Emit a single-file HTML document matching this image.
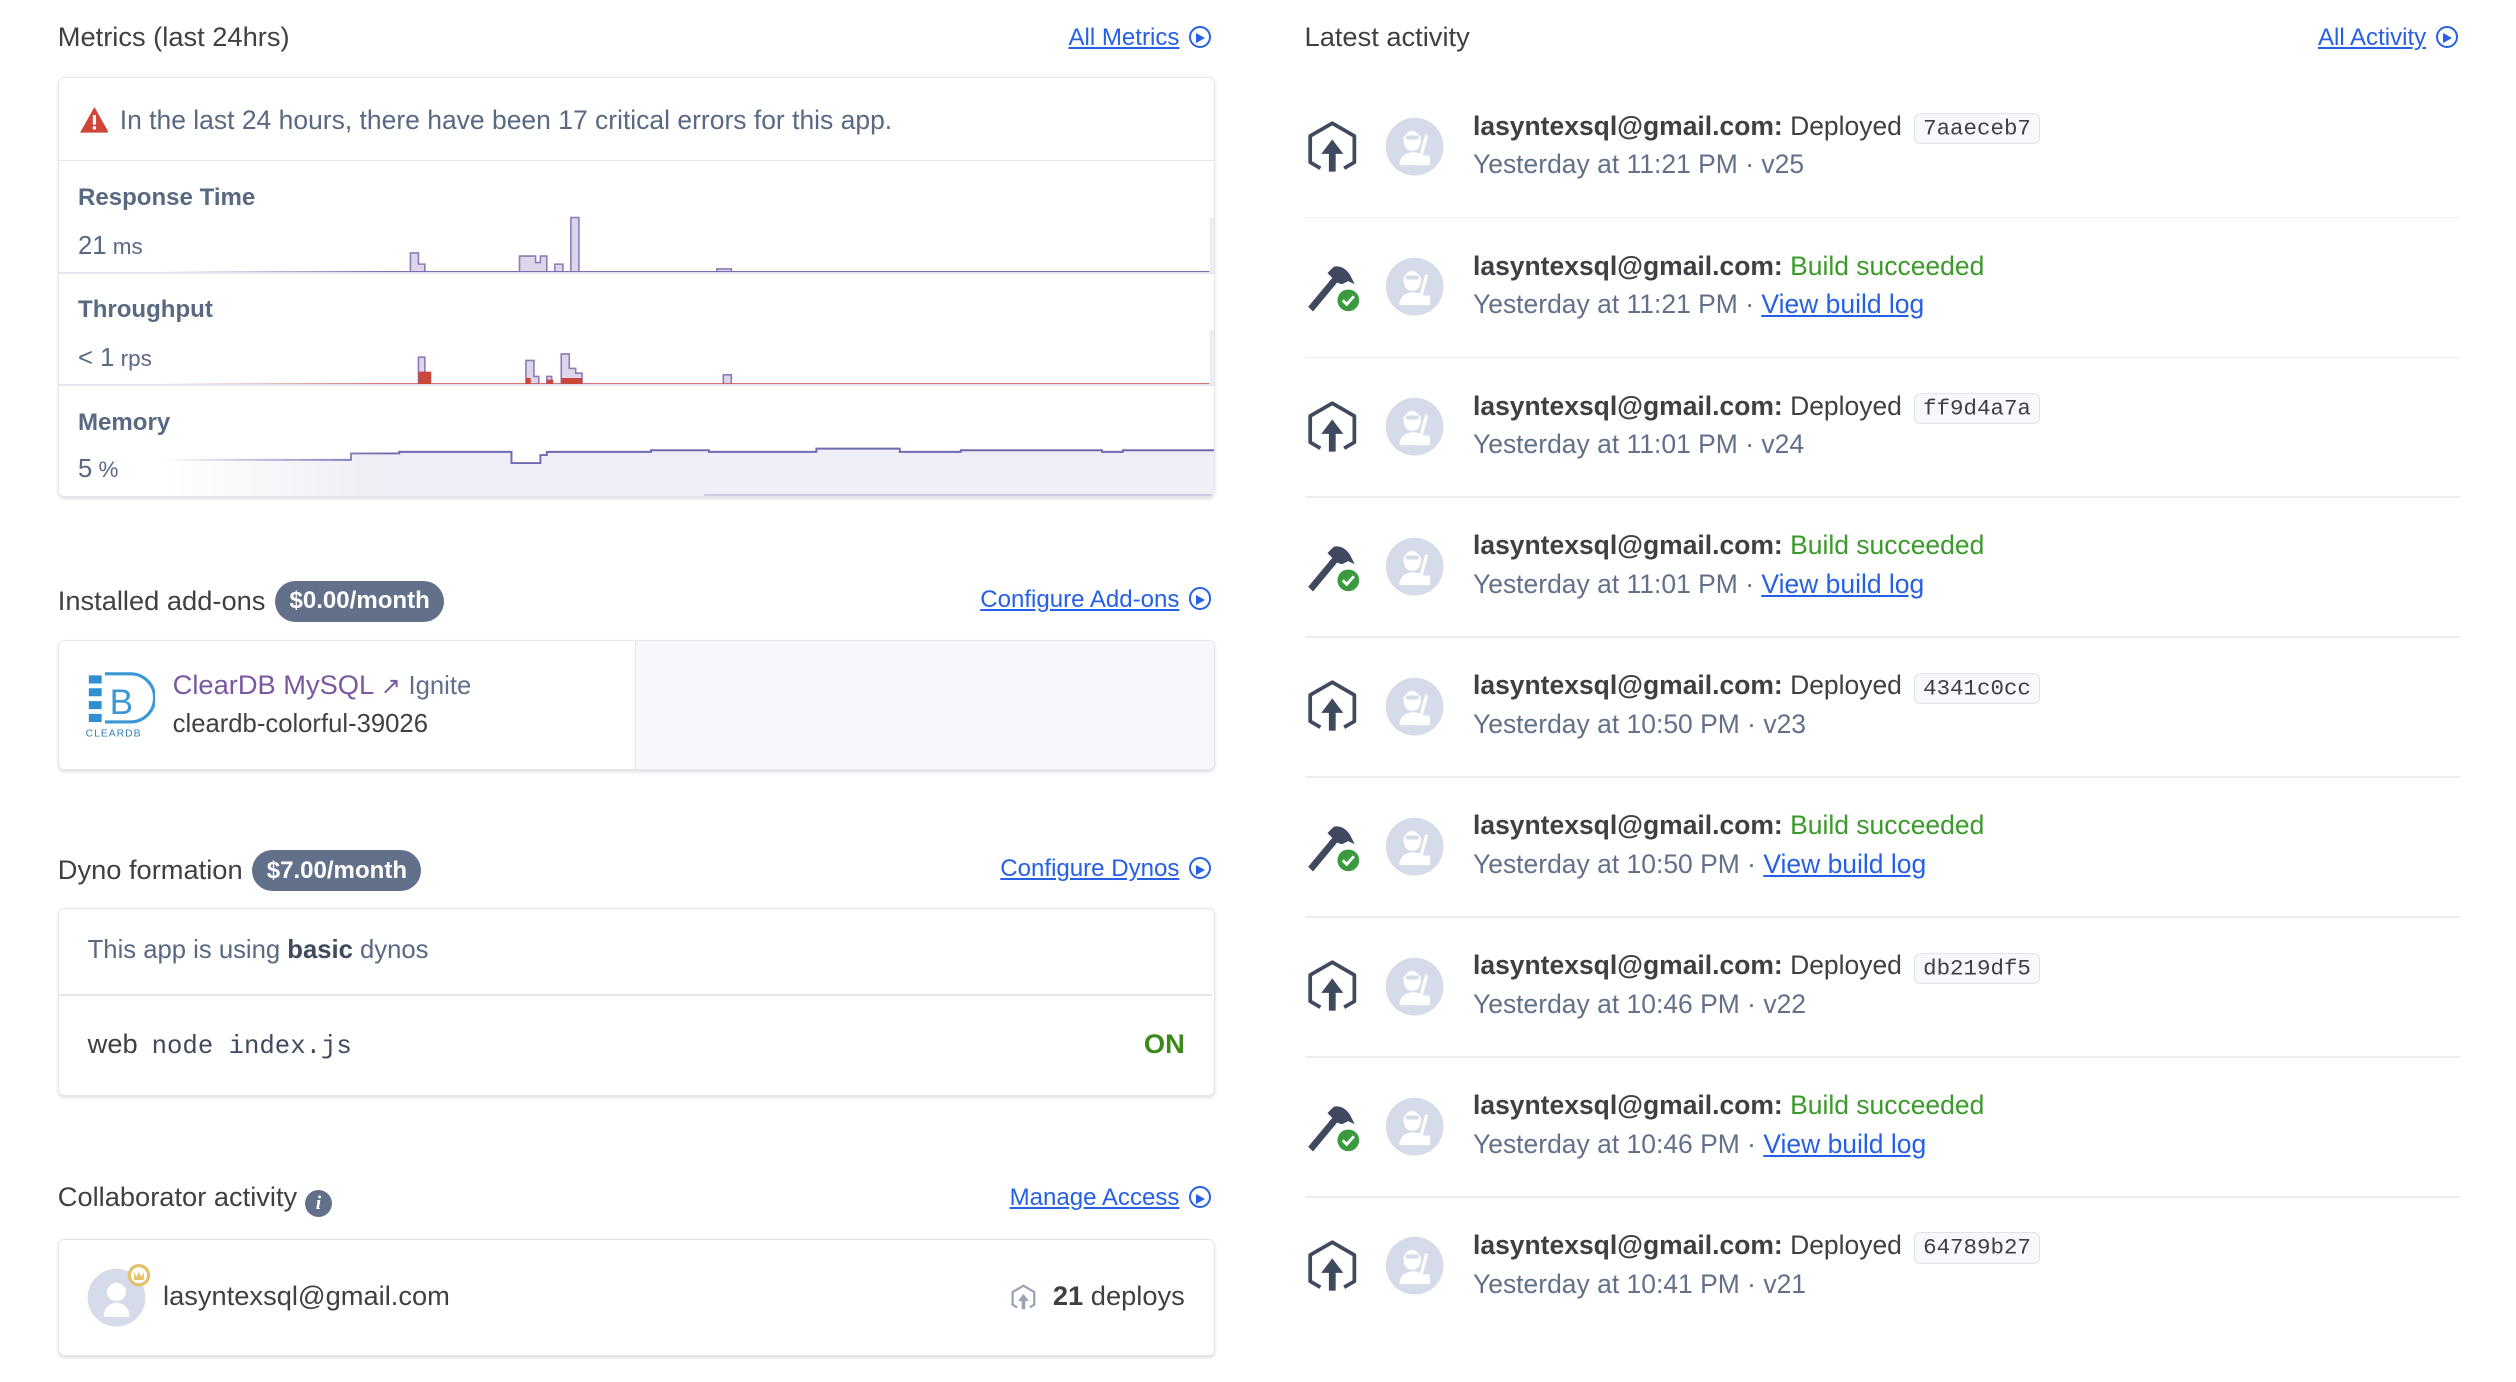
<!DOCTYPE html>
<html><head><meta charset="utf-8"><style>
*{box-sizing:border-box;margin:0;padding:0}
html,body{width:2516px;height:1382px;overflow:hidden;background:#fff}
#w{zoom:1.6046;width:1568px;height:861px;position:relative;font-family:"Liberation Sans",sans-serif;color:#3f3f44}
.a{position:absolute}
.h{font-size:17px;color:#3f3f44;white-space:nowrap}
.lnk{font-size:15px;color:#2660e5;text-decoration:underline;white-space:nowrap}
.ci{display:inline-block;width:14px;height:14px;border:1.5px solid #2660e5;border-radius:50%;vertical-align:-2px;margin-left:6px;position:relative}
.ci:after{content:"";position:absolute;left:3px;top:3.5px;border-left:6px solid #2660e5;border-top:3.5px solid transparent;border-bottom:3.5px solid transparent}
.card{border:1px solid #e3e6ed;border-radius:4px;box-shadow:0 1px 2px rgba(0,0,0,.12);background:#fff}
.pill{display:inline-block;background:#62708a;color:#fff;font-weight:bold;font-size:15px;border-radius:13px;padding:4px 9px;margin-left:6px;vertical-align:1px}
.lbl{font-size:15px;font-weight:bold;color:#596981}
.val{font-size:16px;color:#596981}
.row{position:absolute;left:0;width:720px;height:87px}
.l1{position:absolute;left:105px;top:21px;font-size:16.5px;white-space:nowrap;color:#3f3f44}
.l2{position:absolute;left:105px;top:45px;font-size:16.5px;white-space:nowrap;color:#62708a}
.b{font-weight:bold;color:#3f3f44}
.g{color:#3a9a2a}
.code{font-family:"Liberation Mono",monospace;font-size:14px;border:1px solid #dfe3ea;background:#f7f8fb;border-radius:4px;padding:1px 5px;color:#3f3f44;margin-left:3px}
.vl{color:#2660e5;text-decoration:underline}
.div{position:absolute;left:0;width:720px;height:1px;background:#eceef2}
</style></head><body><div id="w">

<!-- Metrics -->
<div class="a h" style="left:36px;top:13px">Metrics (last 24hrs)</div>
<div class="a lnk" style="right:813px;top:15px">All Metrics<span class="ci"></span></div>
<div class="a card" style="left:36px;top:48px;width:721px;height:262px;overflow:hidden">
  <svg class="a" style="left:0;top:0" width="721" height="262" viewBox="36 48 721 262">
    <defs><linearGradient id="fd" x1="0" x2="1"><stop offset="0" stop-color="#fff" stop-opacity="1"/><stop offset="1" stop-color="#fff" stop-opacity="0"/></linearGradient></defs>
    <path d="M255 169 V157 H260 V164 H264 V169 Z M323 169 V159 H333 V163 H336 V159 H340 V169 Z M345 169 V164 H350 V169 Z M355 169 V135 H360 V169 Z M446 169 V167 H455 V169 Z" fill="#ddd6ea" stroke="#8e7cb8" stroke-width="1"/>
    <line x1="100" y1="169" x2="757" y2="169" stroke="#7d6bb0" stroke-width="1.5"/>
    <path d="M260 239 V222 H264 V239 Z M327 239 V224 H332 V234 H335 V239 Z M340 239 V234 H343 V239 Z M349 239 V220 H354 V229 H358 V232 H362 V239 Z M450 239 V233 H455 V239 Z" fill="#ddd6ea" stroke="#8e7cb8" stroke-width="1"/>
    <path d="M260 239 V231 H268 V239 Z M327 239 V235 H330 V239 Z M340 239 V236 H344 V239 Z M349 239 V235 H362 V239 Z" fill="#c9463d"/>
    <line x1="100" y1="239" x2="757" y2="239" stroke="#c9463d" stroke-width="1.5"/>
    <path d="M100 286 H218 V282 H248 V281 H318 V288 H336 V283 H340 V281 H405 V280 H441 V281 H508 V279 H560 V281 H598 V280 H686 V281 H699 V280 H757 V310 H100 Z" fill="#efedf5"/>
    <path d="M100 286 H218 V282 H248 V281 H318 V288 H336 V283 H340 V281 H405 V280 H441 V281 H508 V279 H560 V281 H598 V280 H686 V281 H699 V280 H757" fill="none" stroke="#6f6bb0" stroke-width="1.2"/>
    <line x1="438" y1="308" x2="757" y2="308" stroke="#cfc9e0" stroke-width="1.5"/>
    <rect x="100" y="100" width="140" height="210" fill="url(#fd)"/>
    <rect x="753" y="135" width="3" height="34" fill="#eee"/>
    <rect x="753" y="205" width="3" height="34" fill="#eee"/>
  </svg>
  <div class="a" style="left:0;top:0;width:721px;height:52px;border-bottom:1px solid #e3e6ed;background:#fff">
    <svg class="a" style="left:13px;top:18px" width="18" height="16" viewBox="0 0 18 16"><path d="M9 0 L18 16 H0 Z" fill="#d0453a"/><rect x="8" y="5" width="2" height="6" fill="#fff"/><rect x="8" y="12" width="2" height="2" fill="#fff"/></svg>
    <div class="a" style="left:38px;top:17px;font-size:16.5px;color:#596981;white-space:nowrap">In the last 24 hours, there have been 17 critical errors for this app.</div>
  </div>
  <div class="a lbl" style="left:12px;top:66px">Response Time</div>
  <div class="a val" style="left:12px;top:96px">21<span style="font-size:14px"> ms</span></div>
  <div class="a lbl" style="left:12px;top:136px">Throughput</div>
  <div class="a val" style="left:12px;top:166px">&lt; 1<span style="font-size:14px"> rps</span></div>
  <div class="a lbl" style="left:12px;top:206px">Memory</div>
  <div class="a val" style="left:12px;top:235px">5<span style="font-size:14px"> %</span></div>
  <div class="a" style="left:0;top:121px;width:721px;height:1px;background:#e3e6ed"></div>
  <div class="a" style="left:0;top:191px;width:721px;height:1px;background:#e3e6ed"></div>
</div>

<!-- Add-ons -->
<div class="a h" style="left:36px;top:362px">Installed add-ons<span class="pill">$0.00/month</span></div>
<div class="a lnk" style="right:813px;top:365px">Configure Add-ons<span class="ci"></span></div>
<div class="a card" style="left:36px;top:399px;width:721px;height:81px;overflow:hidden">
  <div class="a" style="left:359px;top:0;width:362px;height:81px;background:#f7f8fb;border-left:1px solid #e3e6ed"></div>
  <svg class="a" style="left:16px;top:17px" width="44" height="44" viewBox="0 0 44 44">
    <path d="M3 4 h8 v5 h-8z M3 12 h8 v5 h-8z M3 20 h8 v5 h-8z M3 28 h8 v5 h-8z" fill="#2f8fd0"/>
    <path d="M13 3 h16 a13 13 0 0 1 0 30 h-16" fill="none" stroke="#3b98d6" stroke-width="2"/>
    <text x="16" y="28" font-family="Liberation Sans" font-size="22" fill="#3b98d6">B</text>
    <text x="1" y="42" font-family="Liberation Sans" font-size="6.5" fill="#2f7fb8" letter-spacing="0.6">CLEARDB</text>
  </svg>
  <div class="a" style="left:71px;top:17px;font-size:17px;color:#79589f;white-space:nowrap">ClearDB MySQL <span style="font-size:15px">&#8599;</span> <span style="color:#62708a;font-size:16px">Ignite</span></div>
  <div class="a" style="left:71px;top:43px;font-size:16px;color:#3f3f44">cleardb-colorful-39026</div>
</div>

<!-- Dyno -->
<div class="a h" style="left:36px;top:530px">Dyno formation<span class="pill">$7.00/month</span></div>
<div class="a lnk" style="right:813px;top:533px">Configure Dynos<span class="ci"></span></div>
<div class="a card" style="left:36px;top:566px;width:721px;height:117px">
  <div class="a" style="left:18px;top:17px;font-size:16px;color:#596981">This app is using <b style="color:#3f4a5e">basic</b> dynos</div>
  <div class="a" style="left:0;top:53px;width:719px;height:1px;background:#e3e6ed"></div>
  <div class="a" style="left:18px;top:74px;font-size:17px;color:#3f3f44">web <span style="font-family:'Liberation Mono',monospace;font-size:16px;color:#3f4a5e;margin-left:4px">node index.js</span></div>
  <div class="a" style="right:18px;top:74px;font-size:17px;font-weight:bold;color:#3a8a1a">ON</div>
</div>

<!-- Collaborator -->
<div class="a h" style="left:36px;top:736px">Collaborator activity <span style="display:inline-block;width:17px;height:17px;border-radius:50%;background:#62708a;color:#fff;font-size:12px;font-style:italic;font-weight:bold;text-align:center;line-height:17px;font-family:'Liberation Serif',serif;vertical-align:-2px">i</span></div>
<div class="a lnk" style="right:813px;top:738px">Manage Access<span class="ci"></span></div>
<div class="a card" style="left:36px;top:772px;width:721px;height:73px">
  <svg class="a" style="left:17px;top:15px" width="40" height="40" viewBox="0 0 40 40">
    <circle cx="19" cy="21" r="18" fill="#d5dbe8"/>
    <path d="M11 33 q0-8 8-9 q8 1 8 9z M13 16 q6-9 12 0 q0 7-6 7 q-6 0-6-7z" fill="#fff"/>
    <circle cx="33" cy="7" r="6" fill="#fff" stroke="#e2c16a" stroke-width="2"/>
    <path d="M30 5 l1.5 3 l1.5-3 l1.5 3 l1.5-3 v5 h-6z" fill="#e2c16a"/>
  </svg>
  <div class="a" style="left:65px;top:25px;font-size:17px;color:#3f3f44">lasyntexsql@gmail.com</div>
  <svg class="a" style="left:592px;top:27px" width="18" height="18" viewBox="0 0 32 32"><path d="M9 27 L4 24 V10 L16 3 L28 10 V24 L23 27" fill="none" stroke="#9aa3b5" stroke-width="2.5"/><path d="M16 12 L10 20 H14 V29 H18 V20 H22 Z" fill="#9aa3b5"/></svg>
  <div class="a" style="right:18px;top:25px;font-size:17px;color:#3f3f44"><b>21</b> deploys</div>
</div>

<!-- Activity -->
<div class="a h" style="left:813px;top:13px">Latest activity</div>
<div class="a lnk" style="right:36px;top:15px">All Activity<span class="ci"></span></div>

<div class="a" style="left:813px;top:48px;width:720px;height:800px" id="act">
</div>
<script>
var items=[
["d","7aaeceb7","11:21","v25"],["b","","11:21"],
["d","ff9d4a7a","11:01","v24"],["b","","11:01"],
["d","4341c0cc","10:50","v23"],["b","","10:50"],
["d","db219df5","10:46","v22"],["b","","10:46"],
["d","64789b27","10:41","v21"]];
var h="";
var dep='<svg class="a" style="left:0;top:26px" width="34" height="36" viewBox="0 0 32 34"><path d="M9 29 L3 25.5 V10 L16 2.5 L29 10 V25.5 L23 29" fill="none" stroke="#3f4a5e" stroke-width="2.2" stroke-linejoin="round"/><path d="M16 12 L9.5 20.5 H14 V31 H18 V20.5 H22.5 Z" fill="#3f4a5e"/></svg>';
var bld='<svg class="a" style="left:0;top:25px" width="36" height="36" viewBox="0 0 36 36"><path d="M2 31 L17 13 L14 10 L18 6 Q24 5 28 11 L31 17 L27 15 L23 17 L20 16 L5 34 Z" fill="#3f4a5e"/><circle cx="27" cy="27" r="7.5" fill="#3a9a3f" stroke="#fff" stroke-width="1.5"/><path d="M23.5 27 L26 29.5 L30.5 24.5" fill="none" stroke="#fff" stroke-width="1.8"/></svg>';
var av='<svg class="a" style="left:50px;top:25px" width="37" height="37" viewBox="0 0 37 37"><circle cx="18.5" cy="18.5" r="18" fill="#d5dbe8"/><path d="M9 30 q0-7 8-8 q5 0 7 3 l0 5z M11.5 13 q5-9 11 0 q0 8-5.5 8 q-5.5 0-5.5-8z" fill="#fff"/><rect x="13" y="11.5" width="8" height="2.5" rx="1" fill="#d5dbe8"/><path d="M26 11 L22.5 24" stroke="#fff" stroke-width="2"/><path d="M22 24 h6 v6 h-6z" fill="#fff"/></svg>';
items.forEach(function(it,i){
 var top=i*87.2;
 h+='<div class="row" style="top:'+top+'px">'+(it[0]=="d"?dep:bld)+av;
 if(it[0]=="d"){
  h+='<div class="l1"><span class="b">lasyntexsql@gmail.com:</span> Deployed <span class="code">'+it[1]+'</span></div>';
  h+='<div class="l2">Yesterday at '+it[2]+' PM · '+it[3]+'</div>';
 }else{
  h+='<div class="l1"><span class="b">lasyntexsql@gmail.com:</span> <span class="g">Build succeeded</span></div>';
  h+='<div class="l2">Yesterday at '+it[2]+' PM · <span class="vl">View build log</span></div>';
 }
 h+='</div>';
 if(i<8) h+='<div class="div" style="top:'+(top+87)+'px"></div>';
});
document.getElementById('act').innerHTML=h;
</script>
</div></body></html>
